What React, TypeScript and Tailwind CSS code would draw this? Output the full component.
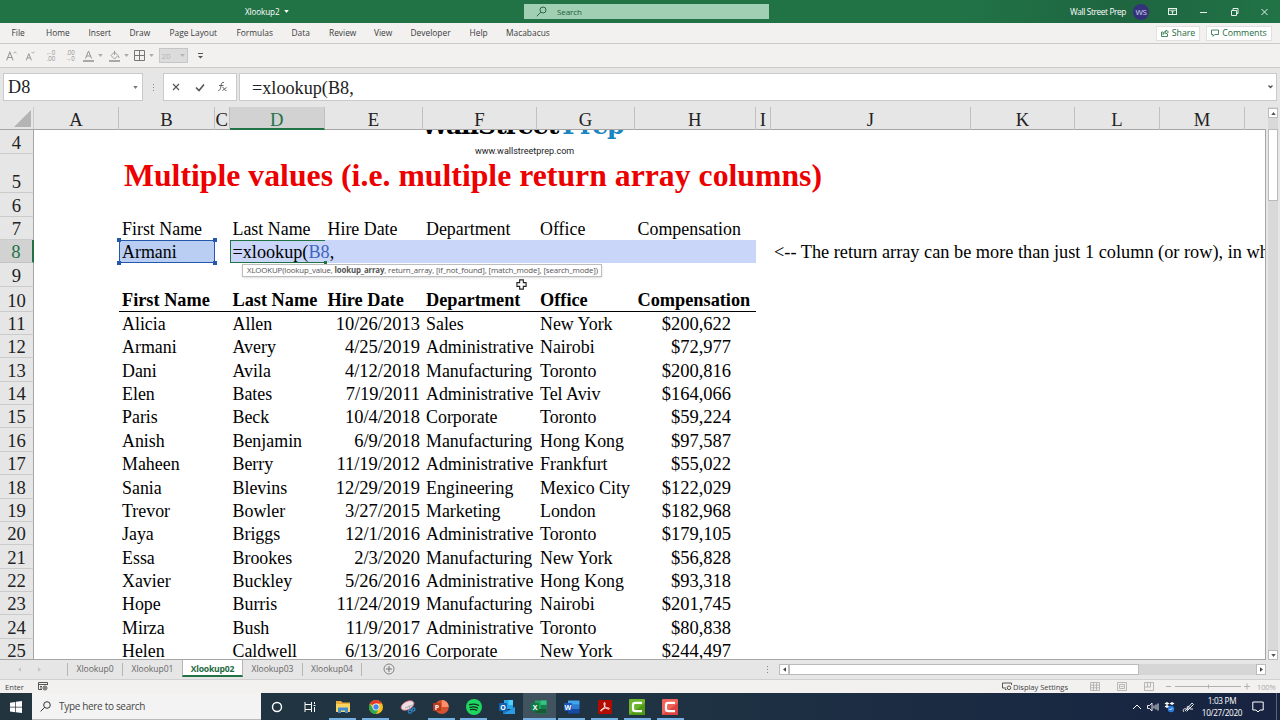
import type { ReactNode } from "react";

const columns = [
  { name: "A", w: 85 },
  { name: "B", w: 96 },
  { name: "C", w: 14.5 },
  { name: "D", w: 95.5 },
  { name: "E", w: 98 },
  { name: "F", w: 114 },
  { name: "G", w: 98 },
  { name: "H", w: 120.5 },
  { name: "I", w: 15.5 },
  { name: "J", w: 200 },
  { name: "K", w: 104 },
  { name: "L", w: 85 },
  { name: "M", w: 85 },
  { name: "", w: 21 },
];

const people = [
  ["Alicia", "Allen", "10/26/2013", "Sales", "New York", "$200,622"],
  ["Armani", "Avery", "4/25/2019", "Administrative", "Nairobi", "$72,977"],
  ["Dani", "Avila", "4/12/2018", "Manufacturing", "Toronto", "$200,816"],
  ["Elen", "Bates", "7/19/2011", "Administrative", "Tel Aviv", "$164,066"],
  ["Paris", "Beck", "10/4/2018", "Corporate", "Toronto", "$59,224"],
  ["Anish", "Benjamin", "6/9/2018", "Manufacturing", "Hong Kong", "$97,587"],
  ["Maheen", "Berry", "11/19/2012", "Administrative", "Frankfurt", "$55,022"],
  ["Sania", "Blevins", "12/29/2019", "Engineering", "Mexico City", "$122,029"],
  ["Trevor", "Bowler", "3/27/2015", "Marketing", "London", "$182,968"],
  ["Jaya", "Briggs", "12/1/2016", "Administrative", "Toronto", "$179,105"],
  ["Essa", "Brookes", "2/3/2020", "Manufacturing", "New York", "$56,828"],
  ["Xavier", "Buckley", "5/26/2016", "Administrative", "Hong Kong", "$93,318"],
  ["Hope", "Burris", "11/24/2019", "Manufacturing", "Nairobi", "$201,745"],
  ["Mirza", "Bush", "11/9/2017", "Administrative", "Toronto", "$80,838"],
  ["Helen", "Caldwell", "6/13/2016", "Corporate", "New York", "$244,497"],
];

const headings = ["First Name", "Last Name", "Hire Date", "Department", "Office", "Compensation"];

function RowHead({ n, active }: { n: number; active?: boolean }) {
  return (
    <div
      className={
        "flex w-[34px] shrink-0 items-end justify-center border-b border-r text-[18.67px] leading-[20px] " +
        (active
          ? "border-b-[#c4c4c4] border-r-[#217346] border-r-2 bg-[#d2d2d2] text-[#217346]"
          : "border-b-[#cbcbcb] border-r-[#a6a6a6] bg-[#e6e6e6] text-[#222]")
      }
    >
      {n}
    </div>
  );
}

function Row({ n, height, active, children }: { n: number; height: string; active?: boolean; children?: ReactNode }) {
  return (
    <div className={"flex shrink-0 " + height}>
      <RowHead n={n} active={active} />
      <div className="w-[85px] shrink-0" />
      {children}
    </div>
  );
}

function Cells({ v, className }: { v: string[]; className: string }) {
  return (
    <div className={"flex items-end whitespace-nowrap leading-[21px] " + className}>
      <div className="w-[110.5px] pl-[3px]">{v[0]}</div>
      <div className="w-[95.5px] pl-[3px]">{v[1]}</div>
      {v[5][0] === "$" ? (
        <div className="w-[98px] pr-[3px] text-right text-[18.5px]">{v[2]}</div>
      ) : (
        <div className="w-[98px] pl-[2.500px]">{v[2]}</div>
      )}
      <div className="w-[114px] pl-[3px]">{v[3]}</div>
      <div className="w-[98px] pl-[3px]">{v[4]}</div>
      {v[5][0] === "$" ? (
        <div className="w-[120.5px] pr-[24.5px] text-right text-[18.5px]">{v[5]}</div>
      ) : (
        <div className="w-[120.5px] pl-[2.500px]">{v[5]}</div>
      )}
    </div>
  );
}

function Caret({ className }: { className?: string }) {
  return (
    <svg viewBox="0 0 6 4" className={"h-[3px] w-[5px] " + (className ?? "")}>
      <path d="M0 0h6L3 4z" fill="currentColor" />
    </svg>
  );
}

function TitleBar() {
  return (
    <header className="flex h-[23px] shrink-0 items-center bg-linear-to-r from-[#217346] from-75% via-[#1e6540] via-88% to-[#217346] text-[8.300px] text-white">
      <div className="flex w-[524px] items-center pl-[245px] text-[8.100px] leading-3 tracking-[-0.1px]">
        Xlookup2
        <Caret className="ml-[5px]" />
      </div>
      <div className="flex h-[15px] w-[245px] items-center bg-[#a0cfb3] pl-[12px] text-[8px] leading-3 tracking-[-0.1px] text-[#1d5c3a]">
        <svg viewBox="0 0 11 11" className="mr-[10px] h-[11px] w-[11px]" fill="none" stroke="currentColor" strokeWidth="0.9">
          <circle cx="7" cy="4" r="3" />
          <path d="M4.8 6.2L.8 10.2" />
        </svg>
        Search
      </div>
      <div className="flex flex-1 items-center justify-end">
        <span className="mr-[7px] pt-px leading-3 tracking-[-0.380px]">Wall Street Prep</span>
        <span className="mr-[19px] flex h-4 w-4 items-center justify-center rounded-full bg-[#35327c] text-[8px] tracking-[-0.4px] text-[#d9d6f3]">WS</span>
        <svg viewBox="0 0 112 12" className="h-3 w-[112px]" fill="none" stroke="#e7f1eb" strokeWidth="1">
          <rect x=".5" y="2.5" width="8" height="6" />
          <path d="M.5 4.200h8M4.500 8V5M3 6.400l1.500-1.500 1.500 1.500" strokeWidth=".9" />
          <path d="M32 6.500h7" />
          <path d="M63.500 4.500h5v5h-5zM65 4.500V2.500h5v5h-1.500" />
          <path d="M93.500 3l6 6M99.500 3l-6 6" />
        </svg>
      </div>
    </header>
  );
}

const ribbonTabs = [
  { t: "File", c: "w-[34.500px]" },
  { t: "Home", c: "w-[42.500px]" },
  { t: "Insert", c: "w-[41px]" },
  { t: "Draw", c: "w-[40px]" },
  { t: "Page Layout", c: "w-[67px]" },
  { t: "Formulas", c: "w-[55px]" },
  { t: "Data", c: "w-[37.500px]" },
  { t: "Review", c: "w-[45px]" },
  { t: "View", c: "w-[36.500px]" },
  { t: "Developer", c: "w-[59px]" },
  { t: "Help", c: "w-[36.500px]" },
  { t: "Macabacus", c: "w-[60px]" },
];

function Ribbon() {
  return (
    <nav className="flex h-[21px] shrink-0 items-center border-b border-[#c9c9c9] bg-[#f2f1f0] pl-[11.500px] text-[8.400px] text-[#3b3b3b]">
      {ribbonTabs.map((r) => (
        <span key={r.t} className={"shrink-0 whitespace-nowrap leading-3 " + r.c}>
          {r.t}
        </span>
      ))}
      <div className="flex flex-1 justify-end gap-[6px] pr-[8px] text-[8.800px] font-medium tracking-[-0.05px] text-[#1e6b41]">
        <span className="flex h-[15px] w-[44px] items-center justify-center gap-[3px] border border-[#e0e0e0] bg-white leading-3">
          <svg viewBox="0 0 8 8" className="h-2 w-2" fill="none" stroke="currentColor" strokeWidth="0.8">
            <path d="M2 3H.5v4.500h6V5M2 5.500C2 3.500 3 2.500 5 2.500V1l2.500 2L5 5V3.800C3.600 3.800 2.600 4.300 2 5.500z" />
          </svg>
          Share
        </span>
        <span className="flex h-[15px] w-[66px] items-center justify-center gap-[3px] border border-[#e0e0e0] bg-white leading-3">
          <svg viewBox="0 0 8 8" className="h-2 w-2" fill="none" stroke="currentColor" strokeWidth="0.8">
            <path d="M.5 1h7v4.500H3.800L2 7.300V5.500H.5z" />
          </svg>
          Comments
        </span>
      </div>
    </nav>
  );
}

function QuickAccess() {
  return (
    <div className="flex h-[24px] shrink-0 items-center border-b border-[#c9c9c9] bg-[#f2f1f0] pl-[5.500px] text-[#949494]">
      <svg viewBox="0 0 40 12" className="h-3 w-[38.500px]" preserveAspectRatio="xMinYMid" fill="none" stroke="currentColor" strokeWidth="1">
        <path d="M.6 10.500L4 2l3.400 8.500M1.800 7.500h4.400" strokeWidth="1.100" />
        <path d="M8 3.200l1.500-1.500L11 3.200" strokeWidth="0.800" />
        <path d="M21 10.500l2.700-7 2.700 7M22 8h3.400" />
        <path d="M26.500 1.700L28 3.200l1.500-1.500" strokeWidth="0.800" />
      </svg>
      <div className="flex w-[19.500px] flex-col items-end pr-[8.500px] text-[6.200px] leading-[5.500px] tracking-[-0.2px]">
        <span>←0</span>
        <span>.00</span>
      </div>
      <div className="flex w-[19.500px] flex-col items-end pr-[8.500px] text-[6.200px] leading-[5.500px] tracking-[-0.2px]">
        <span>.00</span>
        <span>→0</span>
      </div>
      <div className="flex w-[25.500px] items-center gap-[4px]">
        <svg viewBox="0 0 11 12" className="h-3 w-[11px]" fill="none" stroke="currentColor">
          <path d="M2.500 8.500l3-7.500 3 7.500M3.600 6h3.800" />
          <path d="M0 11h11" strokeWidth="2" stroke="#a8a8a8" />
        </svg>
        <Caret className="text-[#aaa]" />
      </div>
      <div className="flex w-[25px] items-center gap-[4px]">
        <svg viewBox="0 0 11 12" className="h-3 w-[11px]" fill="none" stroke="currentColor" strokeWidth="0.9">
          <path d="M2 5.500L5.500 2l3.500 3.500L5.500 9zM5.500 5V.8M9.500 6l.6 2" />
          <path d="M0 11h11" strokeWidth="2" stroke="#a8a8a8" />
        </svg>
        <Caret className="text-[#aaa]" />
      </div>
      <div className="flex w-[25px] items-center gap-[4px]">
        <svg viewBox="0 0 11 11" className="h-[11px] w-[11px]" fill="none" stroke="#777" strokeWidth="1">
          <path d="M.5.5h10v10H.5zM5.500.5v10M.5 5.500h10" />
        </svg>
        <Caret className="text-[#aaa]" />
      </div>
      <div className="flex h-[15px] w-[29px] items-center justify-between border border-[#c6c6c6] bg-[#dcdcdc] px-[2px] text-[8px] text-[#b4b4b4]">
        20
        <Caret />
      </div>
      <svg viewBox="0 0 5 6" className="ml-[10px] h-[6px] w-[5px] text-[#555]">
        <path d="M0 .5h5" stroke="currentColor" />
        <path d="M0 3h5L2.500 5.500z" fill="currentColor" />
      </svg>
    </div>
  );
}

function FormulaBar() {
  return (
    <div className="flex h-[39px] shrink-0 bg-[#e6e6e6] pt-[5px] pl-[3px] font-['Liberation_Serif',serif] text-[18.2px] text-[#222]">
      <div className="flex h-[28px] w-[140px] items-center justify-between border border-[#cacaca] bg-white pr-[4px] pl-[4px] leading-none">
        D8
        <Caret className="text-[#777]" />
      </div>
      <div className="flex h-[28px] w-[20px] flex-col items-center justify-center gap-[2px]">
        <i className="h-px w-px bg-[#888]" />
        <i className="h-px w-px bg-[#888]" />
        <i className="h-px w-px bg-[#888]" />
      </div>
      <div className="flex h-[28px] w-[74px] items-center border border-[#cacaca] bg-white text-[#555]">
        <svg viewBox="0 0 72 12" className="h-3 w-[72px]" fill="none" stroke="currentColor" strokeWidth="1.2">
          <path d="M9 3l6 6M15 3L9 9" />
          <path d="M32 6.500l3 3 5-6" strokeWidth="1.600" />
          <path d="M60 1.500c-2-.8-2.500.8-3 3.500s-1 5-3 4.500M55 4.500h4.500M58.500 6.500c1.500-1 1.500 3.500 4 3M62.500 6.500l-4 3" strokeWidth="0.9" />
        </svg>
      </div>
      <div className="ml-[2px] flex h-[28px] w-[1038px] items-center justify-between border border-[#cacaca] bg-white pr-[3px] pl-[12px]">
        <span className="pt-px leading-[20px]">=xlookup(B8,</span>
        <svg viewBox="0 0 5 4" className="h-1 w-[5px]" fill="none" stroke="#555" strokeWidth="1.300">
          <path d="M.5.5l2 2 2-2" />
        </svg>
      </div>
    </div>
  );
}

function ColumnHeads() {
  return (
    <div className="flex h-[23px] shrink-0 border-b border-[#a6a6a6] bg-[#e6e6e6] text-[18.67px] leading-[25px] text-[#222]">
      <div className="flex w-[34px] shrink-0 items-end justify-end border-r border-[#cbcbcb] pr-[2px] pb-[2px]">
        <svg viewBox="0 0 17 17" className="h-[17px] w-[17px]">
          <path d="M17 0v17H0z" fill="#b4b4b4" />
        </svg>
      </div>
      {columns.map((c, i) => (
        <div
          key={i}
          style={{ width: c.w }}
          className={
            "flex h-[23px] shrink-0 justify-center border-r " +
            (c.name === "D"
              ? "border-b-2 border-r-[#c0c0c0] border-b-[#217346] bg-[#d2d2d2] text-[#217346]"
              : c.name === ""
                ? "border-r-transparent"
                : "border-r-[#c0c0c0]")
          }
        >
          {c.name}
        </div>
      ))}
    </div>
  );
}

function Sheet() {
  return (
    <div className="flex h-[553px] shrink-0 bg-[#e6e6e6]">
      <div className="flex w-[1266px] shrink-0 flex-col font-['Liberation_Serif',serif]">
        <ColumnHeads />
        <div className="relative flex h-[530px] flex-col overflow-hidden border-r border-b border-[#a6a6a6] bg-white text-[17.900px] text-black">
          <Row n={4} height="h-[23.500px]" />
          <Row n={5} height="h-[39.500px]">
            <div className="flex items-start pt-[4px] pl-[5px] text-[31.7px] leading-[36px] font-bold tracking-[0.030px] whitespace-nowrap text-[#ec0000]">
              Multiple values (i.e. multiple return array columns)
            </div>
          </Row>
          <Row n={6} height="h-[23.500px]" />
          <Row n={7} height="h-[23.200px]">
            <Cells v={headings} className="" />
          </Row>
          <Row n={8} height="h-[23.500px]" active>
            <div className="relative w-[96px] shrink-0 border-[1.500px] border-[#2458ad] bg-[#b9cef2] pl-[2px] leading-[23px]">
              Armani
              <i className="absolute -top-[3px] -left-[3px] h-[4px] w-[4px] bg-[#2458ad]" />
              <i className="absolute -top-[3px] -right-[3px] h-[4px] w-[4px] bg-[#2458ad]" />
              <i className="absolute -bottom-[3px] -left-[3px] h-[4px] w-[4px] bg-[#2458ad]" />
              <i className="absolute -right-[3px] -bottom-[3px] h-[4px] w-[4px] bg-[#2458ad]" />
            </div>
            <div className="w-[14.500px] shrink-0" />
            <div className="flex w-[526.500px] shrink-0 bg-[#c9d6f9]">
              <div className="relative w-[95.500px] shrink-0 border-y border-l border-[#217346] pl-[2px] text-[18.200px] leading-[23px] whitespace-nowrap">
                =xlookup(<span className="text-[#3e66c2]">B8</span>,
                <i className="absolute -right-[2px] -bottom-[2px] h-[3px] w-[3px] bg-[#217346]" />
              </div>
            </div>
            <div className="flex shrink-0 items-end pl-[18px] text-[18.300px] leading-[21px] whitespace-nowrap">
              {"<-- The return array can be more than just 1 column (or row), in which"}
            </div>
          </Row>
          <Row n={9} height="h-[23.500px]" />
          <Row n={10} height="h-[25px]">
            <Cells v={headings} className="border-b-[1.500px] border-black text-[18.300px] font-bold" />
          </Row>
          {people.map((p, i) => (
            <Row key={i} n={11 + i} height="h-[23.360px]">
              <Cells v={p} className="" />
            </Row>
          ))}

          <div className="absolute top-[-18px] left-[421px] flex gap-[4px] font-['DejaVu_Serif',serif] text-[25px] leading-[28px] font-bold tracking-[-1.000px] whitespace-nowrap">
            <span>WallStreet</span>
            <span className="text-[#1a86c0]">Prep</span>
          </div>
          <div className="absolute top-[14px] left-[475px] font-['Roboto',sans-serif] text-[9px] leading-[14px] text-[#222]">
            www.wallstreetprep.com
          </div>
          <div className="absolute top-[134px] left-[242px] flex h-[13px] w-[360px] items-center border border-[#bdbdbd] bg-white pl-[4px] font-['Open_Sans',sans-serif] text-[7.900px] leading-[11px] tracking-[-0.160px] whitespace-nowrap text-[#555] shadow-sm">
            <span>
              XLOOKUP(lookup_value, <b>lookup_array</b>, return_array, [if_not_found], [match_mode], [search_mode])
            </span>
          </div>
          <svg viewBox="0 0 12 12" className="absolute top-[149px] left-[516px] h-[11px] w-[11px]">
            <path d="M4 1h4v3h3v4H8v3H4V8H1V4h3z" fill="#fff" stroke="#222" strokeWidth="1.200" />
          </svg>
        </div>
      </div>
      <div className="ml-[2px] flex w-[10px] flex-col bg-[#d9d9d9]">
        <div className="mt-[1px] flex h-[10px] items-center justify-center border border-[#bbb] bg-white text-[#555]">
          <Caret className="rotate-180" />
        </div>
        <div className="mt-[11px] h-[72px] border border-[#bbb] bg-white" />
        <div className="mt-auto flex h-[10px] items-center justify-center border border-[#bbb] bg-white text-[#555]">
          <Caret />
        </div>
      </div>
    </div>
  );
}

function SheetTabs() {
  return (
    <div className="flex h-[20px] shrink-0 border-b border-[#d0d0d0] bg-[#e6e6e6] text-[8.600px] leading-[17px] tracking-[-0.050px] text-[#666]">
      <div className="flex w-[67px] items-center gap-[15px] pl-[17px] text-[#c4c4c4]">
        <Caret className="rotate-90" />
        <Caret className="-rotate-90" />
      </div>
      <div className="my-[3px] flex w-[56px] justify-center border-x border-x-[#b5b5b5] leading-[12px]">Xlookup0</div>
      <div className="my-[3px] flex w-[59px] justify-center leading-[12px]">Xlookup01</div>
      <div className="flex h-[17px] w-[61px] justify-center border-x border-b-2 border-x-[#b5b5b5] border-b-[#217346] bg-white pt-[3px] leading-[12px] font-bold tracking-[-0.2px] text-[#1e6b41]">
        Xlookup02
      </div>
      <div className="my-[3px] flex w-[60px] justify-center border-r border-[#b5b5b5] leading-[12px]">Xlookup03</div>
      <div className="my-[3px] flex w-[59px] justify-center border-r border-[#b5b5b5] leading-[12px]">Xlookup04</div>
      <svg viewBox="0 0 12 12" className="mt-[3px] ml-[21px] h-3 w-3" fill="none" stroke="#777">
        <circle cx="6" cy="6" r="5" strokeWidth="0.9" />
        <path d="M6 3v6M3 6h6" />
      </svg>
      <div className="mr-[11px] ml-auto flex flex-col justify-center gap-[2px]">
        <i className="h-px w-px bg-[#888]" />
        <i className="h-px w-px bg-[#888]" />
        <i className="h-px w-px bg-[#888]" />
      </div>
      <div className="mt-[4px] mr-[14px] flex h-[11px] w-[487px] bg-[#d6d6d6]">
        <div className="flex w-[10px] items-center justify-center border border-[#bbb] bg-white text-[#444]">
          <Caret className="rotate-90" />
        </div>
        <div className="w-[350px] border border-[#bbb] bg-white" />
        <div className="ml-auto flex w-[10px] items-center justify-center border border-[#bbb] bg-white text-[#444]">
          <Caret className="-rotate-90" />
        </div>
      </div>
    </div>
  );
}

function StatusBar() {
  return (
    <div className="flex h-[13px] shrink-0 items-center bg-[#f2f1f0] pl-[5px] text-[7.600px] leading-[12px] text-[#444]">
      <span className="w-[33px]">Enter</span>
      <svg viewBox="0 0 10 9" className="h-[9px] w-[10px]" fill="none" stroke="#444" strokeWidth="0.9">
        <path d="M9.500 3V.5h-9v7H4M.5 2.500h9M2 4.500h2M2 6h2" />
        <circle cx="7" cy="6" r="2" />
        <circle cx="7" cy="6" r=".6" />
      </svg>
      <svg viewBox="0 0 10 9" className="ml-auto h-[9px] w-[10px]" fill="none" stroke="#444" strokeWidth="0.9">
        <path d="M9.500 3V1h-9v5H4M3 7.500h1.500" />
        <circle cx="7" cy="5.800" r="1.800" />
      </svg>
      <span className="ml-[1.500px] w-[76.500px] tracking-[-0.050px]">Display Settings</span>
      <svg viewBox="0 0 65 9" className="h-[9px] w-[65px]" fill="none" stroke="#b0b0b0" strokeWidth="0.9">
        <path d="M.5.5h9v8h-9zM3.500.5v8M6.500.5v8M.5 3.200h9M.5 5.800h9" />
        <path d="M27.500.5h9v8h-9zM29.500 2.500h5v4h-5zM30.500 4.500h3" />
        <path d="M54.500.5h9v8h-9zM57.500.5v4.500h3V.5M54.500 5h3" />
      </svg>
      <svg viewBox="0 0 86 9" className="ml-[10px] h-[9px] w-[86px]" fill="none" stroke="#b0b0b0" strokeWidth="1">
        <path d="M1 4.500h5M10 4.500h66M43.500 2.500v4M79 4.500h6M82 1.500v6" />
      </svg>
      <span className="mr-[5px] ml-[6.500px] w-[18px] tracking-[-0.2px] text-[#aaa]">100%</span>
    </div>
  );
}

function AppIcon({ children }: { children: ReactNode }) {
  return (
    <svg viewBox="0 0 16 16" className="h-4 w-4">
      {children}
    </svg>
  );
}

function Letter({ c }: { c: string }) {
  return (
    <text x="4" y="10.600" textAnchor="middle" fontSize="7" fontWeight="bold" fill="#fff" fontFamily="Open Sans, sans-serif">
      {c}
    </text>
  );
}

const apps: { id: string; line: boolean; on?: boolean; icon: ReactNode }[] = [
  {
    id: "cortana",
    line: false,
    icon: <circle cx="8" cy="8" r="4.500" fill="none" stroke="#fff" strokeWidth="1.400" />,
  },
  {
    id: "tasks",
    line: false,
    icon: (
      <g fill="none" stroke="#fff">
        <path d="M3 3v2.500h6.500V3M3 13v-2.500h6.500V13M3 5.500v5M9.500 5.500v5M12.500 3v2M12.500 8v5M11.500 6.500h2" />
      </g>
    ),
  },
  {
    id: "files",
    line: true,
    icon: (
      <g>
        <path d="M1 2h5l1.500 1.500H15V13H1z" fill="#e9ac36" />
        <path d="M1 5h14v8H1z" fill="#fcd462" />
        <path d="M3 14V8.500h10V14h-3v-2.500H6V14z" fill="#3f8fd2" />
      </g>
    ),
  },
  {
    id: "chrome",
    line: true,
    icon: (
      <g>
        <circle cx="8" cy="8" r="7" fill="#fbc116" />
        <path d="M8 8L1.900 4.500A7 7 0 0 1 14.100 4.500H8z" fill="#e33b2e" />
        <path d="M1.900 4.500A7 7 0 0 0 8 15l3-5.300L8 8 4.900 9.800z" fill="#2da94f" />
        <circle cx="8" cy="8" r="3.400" fill="#fff" />
        <circle cx="8" cy="8" r="2.700" fill="#4285f4" />
      </g>
    ),
  },
  {
    id: "snip",
    line: false,
    icon: (
      <g>
        <ellipse cx="7.500" cy="6.500" rx="7" ry="4" transform="rotate(-28 7.500 6.500)" fill="#ecdfe4" stroke="#d86c7e" strokeWidth=".8" />
        <path d="M5 9l8-3M9 6.500l1 5" stroke="#aaa" fill="none" />
        <circle cx="10" cy="12.500" r="1.700" fill="none" stroke="#2f82c4" strokeWidth="1.300" />
        <circle cx="13.500" cy="10.500" r="1.500" fill="none" stroke="#2f82c4" strokeWidth="1.300" />
      </g>
    ),
  },
  {
    id: "powerpoint",
    line: true,
    icon: (
      <g>
        <circle cx="8.800" cy="8" r="7" fill="#d35230" />
        <path d="M8.800 1a7 7 0 0 1 7 7h-7z" fill="#ff8f6b" />
        <rect y="4" width="8" height="8" rx=".8" fill="#b93a1c" />
        <Letter c="P" />
      </g>
    ),
  },
  {
    id: "spotify",
    line: true,
    icon: (
      <g>
        <circle cx="8" cy="8" r="8" fill="#1ed760" />
        <path d="M3.500 5.700c3-1 6.500-.7 9 .7M4 8.300c2.600-.8 5.500-.5 7.600.7M4.500 10.700c2-.6 4.500-.4 6.300.6" fill="none" stroke="#17301f" strokeWidth="1.300" strokeLinecap="round" />
      </g>
    ),
  },
  {
    id: "outlook",
    line: false,
    icon: (
      <g>
        <path d="M5 1h9v9H5z" fill="#28a8ea" />
        <path d="M9.500 1H14v5H9.500z" fill="#50d0ff" />
        <path d="M4 8l6 3.500L16 7.500V15H4z" fill="#1572c4" />
        <path d="M4 15l12-7v7z" fill="#2b9be4" />
        <rect y="4" width="8" height="8" rx=".8" fill="#0f61b3" />
        <Letter c="O" />
      </g>
    ),
  },
  {
    id: "excel",
    line: true,
    on: true,
    icon: (
      <g>
        <path d="M4 1.500h11.500v13H4z" fill="#21a366" />
        <path d="M9.700 1.500h5.800v4.300H9.700z" fill="#33c481" />
        <path d="M4 10h11.500v4.500H4z" fill="#185c37" />
        <path d="M9.700 6h5.800v4H9.700z" fill="#15804a" />
        <rect y="4" width="8" height="8" rx=".8" fill="#107c41" />
        <Letter c="X" />
      </g>
    ),
  },
  {
    id: "word",
    line: true,
    icon: (
      <g>
        <path d="M4 1.500h11.500v4.300H4z" fill="#41a5ee" />
        <path d="M4 5.800h11.500V10H4z" fill="#2b7cd3" />
        <path d="M4 10h11.500v4.500H4z" fill="#154aa5" />
        <rect y="4" width="8" height="8" rx=".8" fill="#1856b8" />
        <Letter c="W" />
      </g>
    ),
  },
  {
    id: "acrobat",
    line: true,
    icon: (
      <g>
        <rect x="1" y="1" width="14" height="14" rx="1" fill="#b30b00" />
        <path d="M7.500 3.500c1 0 .6 2.500-.3 4.700S4.500 12.300 3.800 12c-1-.6 1.500-2.500 4.700-3s4.300.3 3.700 1C11.500 11 8 8.500 7.300 6.300 6.800 4.800 6.900 3.500 7.500 3.500z" fill="none" stroke="#fff" strokeWidth="1" />
      </g>
    ),
  },
  {
    id: "camtasia",
    line: true,
    icon: (
      <g>
        <rect width="16" height="16" rx="1" fill="#6cb52d" />
        <path d="M0 16L16 4v12z" fill="#4f9a12" />
        <path d="M13 3.800H6.500C4.500 3.800 4 4.300 4 6v4c0 1.700.5 2.200 2.500 2.200H13" fill="none" stroke="#fff" strokeWidth="2.200" />
      </g>
    ),
  },
  {
    id: "recorder",
    line: true,
    icon: (
      <g>
        <rect width="16" height="16" rx="1" fill="#f0635a" />
        <path d="M0 16L16 4v12z" fill="#dc453f" />
        <path d="M13 3.800H6.500C4.500 3.800 4 4.300 4 6v4c0 1.700.5 2.200 2.500 2.200H13" fill="none" stroke="#fff" strokeWidth="2.200" />
      </g>
    ),
  },
];

function Taskbar() {
  return (
    <footer className="flex h-[27px] shrink-0 bg-linear-to-r from-[#22353f] via-[#1f3343] to-[#172341] text-white">
      <div className="flex w-[32px] items-center justify-center">
        <svg viewBox="0 0 12 12" className="h-3 w-3" fill="#fff">
          <path d="M0 1.700l5.300-.8v4.800H0zM6 .8L12 0v5.700H6zM0 6.400h5.300v4.800L0 10.400zM6 6.400h6V12l-6-.8z" />
        </svg>
      </div>
      <div className="flex w-[229px] items-center border-b border-[#bbb] bg-[#f3f3f3] pl-[8px] text-[10px] leading-4 tracking-[-0.320px] text-[#444]">
        <svg viewBox="0 0 11 11" className="mr-[8px] h-[11px] w-[11px]" fill="none" stroke="#333">
          <circle cx="7" cy="4" r="3.300" />
          <path d="M4.700 6.300L.6 10.400" />
        </svg>
        Type here to search
      </div>
      {apps.map((a) => (
        <div key={a.id} className={"flex w-[32.740px] flex-col items-center pt-[6px] " + (a.on ? "bg-[#40535f]" : "")}>
          <AppIcon>{a.icon}</AppIcon>
          {a.line && <div className={"mt-auto h-[2px] bg-[#76b0e2] " + (a.on ? "w-full" : "w-[27px]")} />}
        </div>
      ))}
      <div className="ml-auto flex items-center">
        <svg viewBox="0 0 64 16" className="mr-px h-4 w-[64px]" fill="none" stroke="#fff" strokeWidth="1">
          <path d="M1 10l4-4 4 4" />
          <path d="M15.500 6.500h2l2.500-2.500v8l-2.500-2.500h-2zM22 6.500v3M24 5.500v5M26 4.500v7" strokeWidth="0.9" />
          <path d="M35 3l2.500 1.500L35 6l-2.500-1.500zM40 3l2.500 1.500L40 6l-2.500-1.500zM35 6l2.500 1.500L35 9l-2.500-1.500z" fill="#fff" stroke="none" />
          <circle cx="39" cy="10" r="3.200" fill="#2f7de0" stroke="none" />
          <path d="M37.500 10l1 1 2-2" stroke="#fff" strokeWidth="0.8" />
          <path d="M52 13c-2-2 0-4 2-3s4 0 3-2-3 0-1 2M53 12l7-8 1.500 1.500-7 7M58 10h3" strokeWidth="0.9" />
        </svg>
        <div className="w-[49px] pl-px text-center text-[8.200px] leading-[12px] tracking-[-0.3px]">
          <div>1:03 PM</div>
          <div>10/27/2020</div>
        </div>
        <svg viewBox="0 0 12 12" className="mr-[12px] ml-[6px] h-3 w-3" fill="none" stroke="#fff">
          <path d="M.8 1h10.400v8H8L6 11 4 9H.8z" />
        </svg>
        <div className="mr-[3px] h-[27px] w-px bg-[#5a6478]" />
      </div>
    </footer>
  );
}

export default function App() {
  return (
    <div className="flex h-[720px] w-[1280px] flex-col overflow-hidden bg-[#e6e6e6] font-['Open_Sans',sans-serif]">
      <TitleBar />
      <Ribbon />
      <QuickAccess />
      <FormulaBar />
      <Sheet />
      <SheetTabs />
      <StatusBar />
      <Taskbar />
    </div>
  );
}
